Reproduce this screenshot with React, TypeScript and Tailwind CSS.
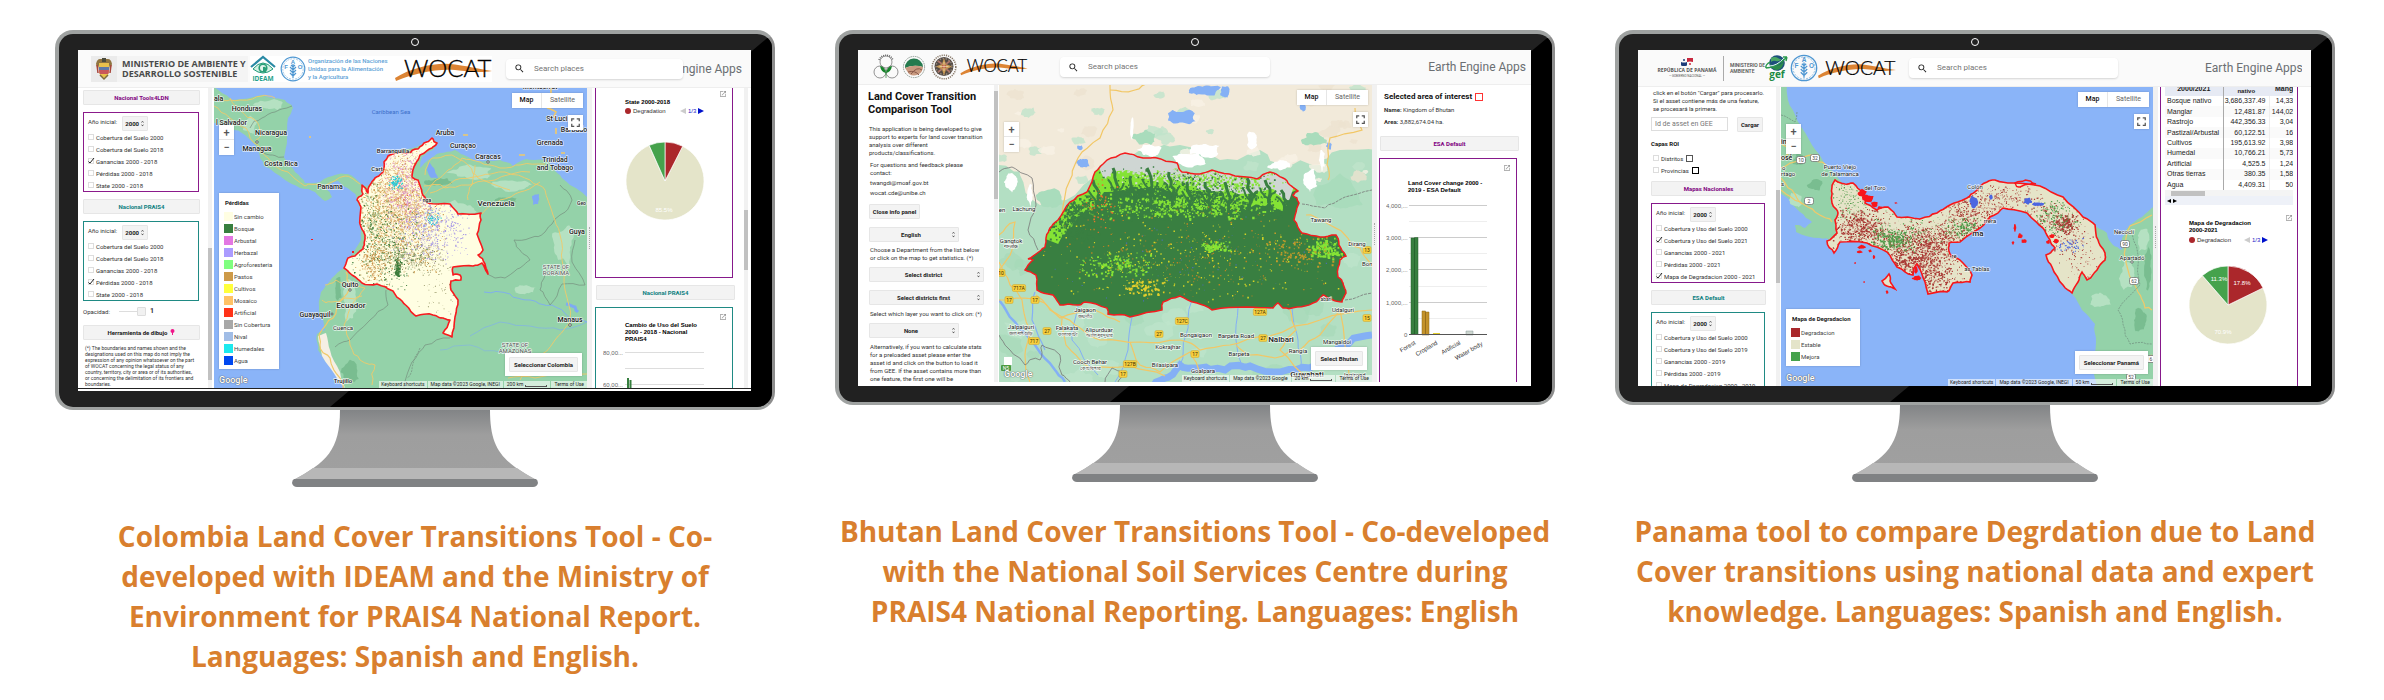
import type { ReactNode } from "react";
import { MdSearch, MdFullscreen, MdOpenInNew, MdUnfoldMore } from "react-icons/md";

type Pt = [number, number];

/* ---------- deterministic drawing helpers ---------- */

function rng(seed: number) {
  let s = seed >>> 0;
  return () => {
    s = (s * 1664525 + 1013904223) >>> 0;
    return s / 4294967296;
  };
}

// Subdivides a poly-line with random midpoint displacement, like a natural border.
function rough(points: Pt[], amp: number, seed: number, closed = true, passes = 2) {
  const r = rng(seed);
  let pts = points.slice();
  let a = amp;
  for (let k = 0; k < passes; k++) {
    const out: Pt[] = [];
    const n = closed ? pts.length : pts.length - 1;
    for (let i = 0; i < n; i++) {
      const p = pts[i];
      const q = pts[(i + 1) % pts.length];
      const len = Math.hypot(q[0] - p[0], q[1] - p[1]);
      const f = Math.min(1, len / 8) * a;
      out.push(p, [(p[0] + q[0]) / 2 + (r() - 0.5) * 2 * f, (p[1] + q[1]) / 2 + (r() - 0.5) * 2 * f]);
    }
    if (!closed) out.push(pts[pts.length - 1]);
    pts = out;
    a *= 0.6;
  }
  return "M" + pts.map((p) => p[0].toFixed(1) + " " + p[1].toFixed(1)).join("L") + (closed ? "Z" : "");
}

// Scatters small squares around a centre.
function specks(seed: number, n: number, cx: number, cy: number, rx: number, ry: number, size = 1) {
  const r = rng(seed);
  let d = "";
  for (let i = 0; i < n; i++) {
    const x = cx + (r() + r() - 1) * rx;
    const y = cy + (r() + r() - 1) * ry;
    const s = size * (0.5 + r());
    d += `M${x.toFixed(1)} ${y.toFixed(1)}h${s.toFixed(1)}v${s.toFixed(1)}h-${s.toFixed(1)}z`;
  }
  return d;
}

// A blob with an irregular edge.
function blob(cx: number, cy: number, rx: number, ry: number, seed: number) {
  const r = rng(seed);
  const pts: Pt[] = [];
  for (let i = 0; i < 12; i++) {
    const t = (i / 12) * Math.PI * 2;
    const k = 0.6 + r() * 0.5;
    pts.push([cx + Math.cos(t) * rx * k, cy + Math.sin(t) * ry * k]);
  }
  return rough(pts, Math.min(1.6, rx * 0.3), seed + 1);
}

/* ---------- logos ---------- */

function Wocat({ className }: { className: string }) {
  return (
    <svg viewBox="0 0 97 26" className={`overflow-visible ${className}`} role="img" aria-label="WOCAT">
      <path d="M0 22C18 11 42 6 60 8.500S84 13 97 15C84 17 74 15.500 60 14C42 12.500 20 17 1 25z" fill="#dc8434" />
      <text x="9" y="20.500" fontFamily="Lato, sans-serif" fontSize="24" fontWeight="300" fill="#000" stroke="#000" strokeWidth="0.300">WOCAT</text>
    </svg>
  );
}

function Fao({ className }: { className: string }) {
  return (
    <svg viewBox="0 0 26 26" className={className} fill="none" stroke="#4f97d2">
      <circle cx="13" cy="13" r="11.800" strokeWidth="1.200" />
      <circle cx="13" cy="13" r="10.200" strokeWidth="0.500" strokeDasharray="2 1" />
      <path d="M13 8v14M13 11l-2-2M13 11l2-2M13 14l-3-3M13 14l3-3M13 17l-3-3M13 17l3-3M13 20l-3-3M13 20l3-3" strokeWidth="1.200" />
      <g fontFamily="Liberation Sans, sans-serif" fontSize="6" fontWeight="700" fill="#4f97d2" stroke="none" textAnchor="middle">
        <text x="6" y="13">F</text>
        <text x="13" y="7.500">A</text>
        <text x="20" y="13">O</text>
      </g>
    </svg>
  );
}

function ColombiaArms() {
  return (
    <svg viewBox="0 0 26 26" className="size-[26px] shrink-0 bg-[#ebebeb]">
      <path d="M5 8q1-5 4-5h8q3 0 4 5l-2 6-1-5H8l-1 5z" fill="#8f7440" />
      <path d="M11 2h4v4h-4z" fill="#4b4b3b" />
      <path d="M8 7h10v8q0 5-5 7-5-2-5-7z" fill="#e9c14c" />
      <path d="M8 11h10v3H8z" fill="#5f79a8" />
      <path d="M8 14h10q0 3-1 4H9q-1-1-1-4z" fill="#c8565a" />
      <path d="M9 19l4 4 4-4" stroke="#7e6a3c" fill="none" strokeWidth="1.500" />
      <path d="M6 9l1 8M20 9l-1 8" stroke="#a8453a" strokeWidth="1.500" />
    </svg>
  );
}

function Ideam() {
  return (
    <svg viewBox="0 0 26 26" className="size-[26px] shrink-0 overflow-visible">
      <path d="M1 11L13 1l12 10" fill="none" stroke="#2a8aa5" strokeWidth="2.200" />
      <path d="M3 13Q13 1 23 13Q13 21 3 13z" fill="#d6f0e4" stroke="#1f9a78" />
      <circle cx="13" cy="12" r="4.600" fill="#2a9f78" />
      <path d="M13 15a3 3 0 1 1 3-3q-1-2-3-1z" fill="#e5f5ee" />
      <text x="13" y="24.500" textAnchor="middle" fontFamily="Open Sans, sans-serif" fontSize="6.500" fontWeight="700" fill="#25a08a">IDEAM</text>
    </svg>
  );
}

function TreeLogo() {
  return (
    <svg viewBox="0 0 26 26" className="size-[26px]" fill="none" stroke="#666" strokeWidth="0.700">
      <circle cx="13" cy="8" r="6" />
      <circle cx="7" cy="18" r="6" />
      <circle cx="19" cy="18" r="6" />
      <path d="M6 6A7.500 7.500 0 0 1 20 6" strokeDasharray="1 1" strokeWidth="1.600" />
      <path d="M13 24v-8" stroke="#2b8a3a" />
      <path d="M13 19q-1-6-6-7 1 6 6 7zM13 19q1-6 6-7-1 6-6 7z" fill="#16852b" stroke="none" />
    </svg>
  );
}

function SoilLogo() {
  return (
    <svg viewBox="0 0 24 24" className="size-[24px]">
      <circle cx="12" cy="12" r="10.600" fill="none" stroke="#8e9a92" strokeDasharray="1.500 0.800" />
      <path d="M3 13A9 9 0 0 1 21 12Q12 9 3 13z" fill="#257a4e" />
      <path d="M3 13Q12 9 21 12A9 9 0 0 1 7 19z" fill="#c99a80" />
      <path d="M6 17Q13 15 17 20M9 19q6-8 11-4" stroke="#8a5a4a" fill="none" />
    </svg>
  );
}

function BhutanSeal() {
  return (
    <svg viewBox="0 0 26 26" className="size-[26px]">
      <circle cx="13" cy="13" r="11.800" fill="none" stroke="#8a7b6b" strokeWidth="1.600" strokeDasharray="1.200 1" />
      <circle cx="13" cy="12.500" r="9.500" fill="#544a44" />
      <circle cx="13" cy="12.500" r="8" fill="none" stroke="#8f8579" strokeDasharray="1.500 1.500" strokeWidth="1.500" />
      <path d="M13 4l2 6 6 2.500-6 3-2 6-2-6-6-3 6-2.500z" fill="#c89a55" />
      <path d="M7 7l4 3M19 7l-4 3M7 18l4-3M19 18l-4-3" stroke="#b0766a" strokeWidth="1.600" />
      <circle cx="13" cy="12.500" r="2" fill="#b8473f" />
      <path d="M13 8v9M8.500 12.500h9" stroke="#f0ddb0" strokeWidth="0.700" />
    </svg>
  );
}

function Gef() {
  return (
    <svg viewBox="0 0 24 26" className="h-[26px] w-[24px] shrink-0 overflow-visible">
      <circle cx="12" cy="8" r="7.800" fill="#1d4f7c" />
      <path d="M6 3q4-2 7 0t4 1q-3 3-6 2T6 7z" fill="#4aa764" />
      <path d="M5 9q7 5 14-3-1 8-7 9-5 0-7-6z" fill="#2b8b4b" />
      <path d="M1 13Q12 12 22 2M1 13q-1-3 4-6M22 2l-4 0M22 2l-1 4" stroke="#2b9a4d" strokeWidth="1.400" fill="none" />
      <path d="M4 11q8 0 15-8" stroke="#d8ecf4" fill="none" />
      <text x="12" y="22.500" textAnchor="middle" fontFamily="Open Sans, sans-serif" fontSize="10" fontWeight="700" fill="#1d8a45" stroke="#fafafa" strokeWidth="1" paintOrder="stroke">gef</text>
    </svg>
  );
}

function PanamaLogo() {
  return (
    <div className="flex shrink-0 items-center text-[#555]">
      <div className="flex w-[60px] flex-col items-center">
        <svg viewBox="0 0 12 8" className="h-[8px] w-[12px]">
          <path d="M6 0h6v4q-3-1-6 0z" fill="#c8283f" />
          <path d="M0 4q3 1 6 0v3.500q-3 1-6 0z" fill="#1d3d7a" />
          <circle cx="3" cy="2" r="1" fill="#1d3d7a" />
          <circle cx="9" cy="6" r="1" fill="#c8283f" />
        </svg>
        <span className="mt-px font-['Open_Sans',sans-serif] text-[5px] leading-[7px] font-bold whitespace-nowrap">REPÚBLICA DE PANAMÁ</span>
        <span className="text-[3px] leading-[4px] whitespace-nowrap">— GOBIERNO NACIONAL —</span>
      </div>
      <div className="mx-[6px] h-[25px] w-px bg-[#aaa]" />
      <span className="w-[35px] text-[5px] leading-[6px] font-semibold whitespace-nowrap">
        MINISTERIO DE
        <br />
        AMBIENTE
      </span>
    </div>
  );
}

/* ---------- shared controls ---------- */

function SearchBox({ className }: { className: string }) {
  return (
    <label className={`flex h-[20px] items-center rounded-[4px] bg-white pl-[8px] shadow-[0_1px_2px_rgba(0,0,0,0.15)] ${className}`}>
      <MdSearch className="size-[11px] shrink-0 text-[#222]" />
      <input
        aria-label="Search places"
        placeholder="Search places"
        className="ml-[9px] w-full min-w-0 bg-transparent text-[8px] outline-none placeholder:text-[#757575]"
      />
    </label>
  );
}

function Brand({ className }: { className: string }) {
  return (
    <span className={`overflow-hidden text-[12px] leading-[18px] whitespace-nowrap text-[#6b6f73] ${className}`}>
      Earth Engine Apps
    </span>
  );
}

function Btn({ children, className }: { children: ReactNode; className: string }) {
  return (
    <button className={`flex h-[15px] shrink-0 items-center justify-center rounded-[1px] border border-[#e6e6e6] bg-[#f3f3f3] text-[6px] font-bold whitespace-nowrap ${className}`}>
      {children}
    </button>
  );
}

function Drop({ value, label, className }: { value: string; label: string; className: string }) {
  return (
    <span className={`relative flex h-[15px] shrink-0 rounded-[1px] border border-[#e6e6e6] bg-[#f3f3f3] ${className}`}>
      <select aria-label={label} className="w-full appearance-none bg-transparent pr-[6px] text-center text-[6px] font-bold text-[#222] [text-align-last:center]">
        <option>{value}</option>
      </select>
      <MdUnfoldMore className="pointer-events-none absolute top-[3px] right-px size-[7px] text-[#444]" />
    </span>
  );
}

function Check({ label, on, swatch }: { label: string; on?: boolean; swatch?: string }) {
  return (
    <label className="flex h-[12px] shrink-0 items-center text-[6px] whitespace-nowrap text-[#333]">
      <span className="relative mr-[2px] flex size-[6px]">
        <input type="checkbox" defaultChecked={on} className="peer size-[6px] appearance-none border border-[#ddd] bg-white" />
        <svg viewBox="0 0 6 6" className="pointer-events-none absolute inset-0 hidden overflow-visible peer-checked:block">
          <path d="M0.500 3.500L2 5L6 0" fill="none" stroke="#222" />
        </svg>
      </span>
      {label}
      {swatch && <span className={`ml-[3px] size-[7px] border bg-white ${swatch}`} />}
    </label>
  );
}

function LayerBox({ items, checked, className }: { items: string[]; checked: number[]; className: string }) {
  return (
    <div className={`flex h-[80px] shrink-0 flex-col border pt-[3px] pl-[4px] ${className}`}>
      <div className="flex h-[15px] shrink-0 items-start text-[6px] text-[#333]">
        <span className="mr-[5px] leading-[11px]">Año inicial:</span>
        <Drop value="2000" label="Año inicial" className="w-[26px]" />
      </div>
      {items.map((t, i) => (
        <Check key={t} label={t} on={checked.includes(i)} />
      ))}
    </div>
  );
}

function Scroll({ thumb }: { thumb: string }) {
  return (
    <div className="relative w-[4px] shrink-0 self-stretch bg-[#f1f1f1]">
      <div className={`w-full bg-[#c1c1c1] ${thumb}`} />
    </div>
  );
}

function Splitter() {
  return (
    <div className="flex w-[5px] shrink-0 items-center justify-center bg-[#f1f1f1]">
      <div className="h-[22px] border-l border-dotted border-[#aaa]" />
    </div>
  );
}

type Place = { t: string; x: number; y: number; s?: number; w?: number; c?: string; a?: "start" | "end" };

function Labels({ items }: { items: Place[] }) {
  return (
    <g fontFamily="Roboto, sans-serif" textAnchor="middle" stroke="#fff" strokeOpacity="0.75" strokeWidth="1.500" strokeLinejoin="round" paintOrder="stroke">
      {items.map((p) => (
        <text key={p.t + p.x + "-" + p.y} x={p.x} y={p.y + 2.5} fontSize={p.s ?? 7} fontWeight={p.w ?? 500} fill={p.c ?? "#222"} textAnchor={p.a ?? "middle"}>
          {p.t}
        </text>
      ))}
    </g>
  );
}

function MapFrame({
  viewBox,
  drawing,
  legend,
  action,
  scale,
  source,
  right,
}: {
  viewBox: string;
  drawing: ReactNode;
  legend?: ReactNode;
  action: string;
  scale: string;
  source: string;
  right: string;
}) {
  return (
    <div className="relative min-w-0 overflow-hidden bg-[#8ab4f8]">
      <svg viewBox={viewBox} preserveAspectRatio="xMidYMid slice" className="absolute inset-0 size-full">
        {drawing}
      </svg>
      <div className="absolute top-[37px] left-[5px] flex w-[15px] flex-col divide-y divide-[#e6e6e6] bg-white text-[#555] shadow-[0_0_2px_rgba(0,0,0,0.2)]">
        <button aria-label="Zoom in" className="flex h-[15px] items-center justify-center text-[11px] leading-none font-medium">+</button>
        <button aria-label="Zoom out" className="flex h-[15px] items-center justify-center text-[11px] leading-none font-medium">−</button>
      </div>
      <div className={`absolute top-[5px] flex h-[15px] divide-x divide-[#e6e6e6] bg-white text-[7px] shadow-[0_0_2px_rgba(0,0,0,0.2)] ${right}`}>
        <button className="w-[30px] font-medium text-[#111]">Map</button>
        <button className="w-[41px] text-[#666]">Satellite</button>
      </div>
      <button aria-label="Full screen" className={`absolute top-[27px] flex size-[15px] items-center justify-center bg-white text-[#555] shadow-[0_0_2px_rgba(0,0,0,0.2)] ${right}`}>
        <MdFullscreen className="size-[15px]" />
      </button>
      {legend}
      <div className="absolute right-[5px] bottom-[12px] bg-white p-[4px] shadow-[0_0_2px_rgba(0,0,0,0.2)]">
        <Btn className="px-[4px] text-[#222]">{action}</Btn>
      </div>
      <span className="absolute bottom-0 left-[5px] text-[9px] leading-[15px] font-medium text-white [text-shadow:0_0_1px_#555,0_0_1px_#555]">Google</span>
      <div className="absolute right-0 bottom-0 flex h-[7px] gap-px text-[5px] leading-[7px] whitespace-nowrap text-[#222]">
        <span className="bg-white/60 px-[2px]">Keyboard shortcuts</span>
        <span className="bg-white/60 px-[3px]">{source}</span>
        <span className="flex items-center gap-[2px] bg-white/60 px-[3px]">
          {scale}
          <i className="mt-[3px] h-[2px] w-[22px] border border-t-0 border-[#555]" />
        </span>
        <a href="#terms" className="bg-white/60 px-[3px]">Terms of Use</a>
      </div>
    </div>
  );
}

function Legend({ title, rows, className }: { title: string; rows: [string, string][]; className: string }) {
  return (
    <div className={`absolute left-[5px] bg-white px-[5px] text-[6px] text-[#222] shadow-[0_0_2px_rgba(0,0,0,0.2)] ${className}`}>
      <div className="h-[15px] pt-[3px] pl-px leading-[10px] font-bold whitespace-nowrap">{title}</div>
      <ul>
        {rows.map(([name, color]) => (
          <li key={name} className="flex h-[12px] items-center gap-px whitespace-nowrap text-[#444]">
            <svg viewBox="0 0 9 9" className="size-[9px]">
              <rect width="9" height="9" fill={color} />
            </svg>
            {name}
          </li>
        ))}
      </ul>
    </div>
  );
}

/* ---------- pies and bars ---------- */

function slice(cx: number, cy: number, r: number, from: number, to: number) {
  const p = (a: number) => {
    const t = ((a - 90) * Math.PI) / 180;
    return `${(cx + r * Math.cos(t)).toFixed(2)} ${(cy + r * Math.sin(t)).toFixed(2)}`;
  };
  return `M${cx} ${cy}L${p(from)}A${r} ${r} 0 ${to - from > 180 ? 1 : 0} 1 ${p(to)}Z`;
}

function Pie({ red, green, labels }: { red: number; green: number; labels: [string, number, number][] }) {
  return (
    <svg viewBox="0 0 80 80" className="size-[80px] shrink-0">
      <g stroke="#fff" strokeWidth="0.700">
        <path d={slice(40, 40, 39, red, 360 - green)} fill="#e4e4c9" />
        <path d={slice(40, 40, 39, 0, red)} fill="#ab272b" />
        <path d={slice(40, 40, 39, 360 - green, 360)} fill="#45a24c" />
      </g>
      <g fontFamily="Liberation Sans, sans-serif" fontSize="6" fill="#fff" textAnchor="middle">
        {labels.map(([t, x, y]) => (
          <text key={t} x={x} y={y}>{t}</text>
        ))}
      </g>
    </svg>
  );
}

function PieLegend({ text }: { text: string }) {
  return (
    <div className="flex h-[10px] items-center font-['Liberation_Sans',sans-serif] text-[6px] whitespace-nowrap text-[#333]">
      <span className="mr-[2px] size-[6px] rounded-full bg-[#ab272b]" />
      <span className="w-[47px]">{text}</span>
      <svg viewBox="0 0 6 6" className="size-[6px]"><path d="M6 0v6L0 3z" fill="#ccc" /></svg>
      <span className="mx-[2px] text-[#2222c8]">1/3</span>
      <svg viewBox="0 0 6 6" className="size-[6px]"><path d="M0 0v6l6-3z" fill="#0011cc" /></svg>
    </div>
  );
}

const chartTitle = "font-['Liberation_Sans',sans-serif] text-[6px] leading-[7px] font-bold text-black";

/* ---------- Colombia ---------- */

const colombia: Pt[] = [
  [437, 143], [432, 138], [424, 143], [418, 149], [411, 152], [400, 152], [395, 153], [388, 156], [384, 162], [383, 172], [375, 178], [370, 185], [368, 193], [362, 185], [363, 194], [357, 200], [361, 207], [361, 227], [365, 239], [363, 249], [355, 256], [348, 258], [344, 268], [352, 275], [362, 283], [377, 284], [393, 291], [402, 301], [410, 310], [416, 316], [433, 315], [443, 318], [450, 320], [443, 333], [452, 337], [455, 317], [458, 300], [451, 290], [451, 281], [461, 280], [460, 275], [453, 275], [453, 267], [473, 266], [482, 263], [488, 274], [485, 264], [478, 255], [483, 250], [477, 234], [481, 220], [481, 213], [458, 214], [450, 204], [427, 203], [422, 193], [418, 180], [412, 177], [416, 163], [420, 155], [432, 148],
];
const colombiaPath = rough(colombia, 1.3, 7);
const southAmerica = rough([[357, 200], [361, 185], [370, 185], [383, 170], [388, 156], [400, 152], [424, 143], [436, 141], [433, 150], [422, 157], [420, 168], [428, 160], [440, 153], [455, 150], [466, 156], [478, 161], [500, 160], [513, 166], [526, 159], [545, 160], [552, 167], [560, 175], [570, 185], [592, 202], [592, 392], [345, 392], [336, 372], [318, 350], [317, 334], [325, 330], [319, 312], [321, 292], [332, 278], [344, 268], [361, 240], [361, 215]], 1.5, 3);
const centralAmerica = rough([[210, 84], [222, 93], [232, 100], [262, 95], [285, 100], [293, 108], [288, 118], [287, 140], [284, 157], [295, 172], [305, 183], [320, 182], [335, 175], [348, 174], [362, 185], [368, 193], [358, 201], [350, 190], [338, 181], [325, 189], [332, 197], [325, 201], [315, 192], [300, 188], [285, 180], [264, 166], [258, 150], [245, 135], [230, 128], [210, 120]], 1.5, 11);
const colombiaSpecks: [string, number, number, number, number, number, number][] = [
  ["#d1a35b", 1500, 398, 208, 50, 72, 0.9], ["#e8b97a", 1300, 400, 200, 48, 66, 0.8], ["#a99ae6", 560, 430, 228, 42, 36, 0.9],
  ["#d98bd0", 420, 405, 185, 28, 44, 0.8], ["#3c7d3c", 420, 385, 245, 44, 46, 0.9], ["#26c9d6", 60, 396, 182, 8, 8, 1.1], ["#26c9d6", 50, 432, 218, 10, 9, 1],
  ["#3c7d3c", 90, 397, 268, 4, 12, 1.3], ["#e2574c", 110, 400, 190, 44, 66, 0.7], ["#8b8b5b", 380, 412, 258, 40, 18, 0.7], ["#c98f45", 260, 374, 262, 18, 28, 0.8],
  ["#5f8f4d", 200, 372, 215, 16, 44, 0.8], ["#8b8b5b", 60, 440, 290, 26, 34, 0.7],
];

function ColombiaMap() {
  return (
    <>
      <rect x="214" y="88" width="373" height="300" fill="#8ab4f8" />
      <path d={southAmerica} fill="#94d2a9" />
      <path d={centralAmerica} fill="#94d2a9" />
      <g fill="#b5e1c2">
        <path d={blob(455, 208, 26, 8, 5)} />
        <path d={blob(470, 172, 24, 7, 6)} />
        <path d={blob(515, 185, 24, 6, 8)} />
        <path d={blob(563, 245, 12, 22, 9)} />
        <path d={blob(525, 290, 12, 6, 12)} />
        <path d={blob(270, 105, 16, 6, 13)} />
        <path d={blob(350, 300, 8, 26, 14)} />
        <path d={blob(250, 125, 8, 10, 19)} />
      </g>
      <g fill="#79bd90">
        <path d={blob(440, 182, 16, 5, 15)} />
        <path d={blob(505, 200, 14, 3, 16)} />
        <path d={blob(350, 372, 10, 14, 17)} />
        <path d={blob(338, 290, 4, 14, 18)} />
      </g>
      <path d={rough([[318, 336], [326, 333], [330, 350], [340, 372], [345, 388], [338, 380], [322, 356]], 1, 4)} fill="#f5efe4" />
      <path d={rough([[429, 162], [434, 168], [438, 178], [431, 178], [427, 170]], 1, 21)} fill="#7fa9f5" />
      <path d={rough([[532, 196], [539, 194], [538, 204], [533, 205]], 1, 22)} fill="#7fa9f5" />
      <g fill="none" stroke="#7eabf3" strokeWidth="0.900">
        <path d={rough([[484, 292], [510, 294], [530, 300], [552, 305], [570, 318], [587, 322]], 2, 31, false)} />
        <path d={rough([[470, 336], [500, 322], [530, 326], [560, 330], [587, 322]], 2, 32, false)} strokeWidth="0.600" />
        <path d={rough([[440, 350], [470, 345], [500, 352], [540, 360]], 3, 33, false)} strokeWidth="0.500" />
        <path d={rough([[566, 304], [575, 307], [578, 312]], 1, 34, false)} strokeWidth="3" />
      </g>
      <g fill="none" stroke="#758f7e" strokeWidth="0.700">
        <path d={rough([[487, 274], [505, 278], [520, 268], [530, 260], [520, 250], [514, 240], [530, 238], [545, 232], [560, 215], [572, 200], [560, 185]], 2, 41, false)} />
        <path d={rough([[450, 338], [425, 345], [412, 362], [404, 388]], 2, 42, false)} />
        <path d={rough([[386, 290], [388, 305], [370, 320], [350, 340], [335, 347]], 2, 43, false)} />
        <path d={rough([[420, 348], [412, 368], [407, 378]], 2, 44, false)} strokeDasharray="2 1" />
        <path d={rough([[575, 240], [572, 262], [585, 285], [562, 284], [550, 305], [540, 290], [545, 275]], 2, 45, false)} />
        <path d={rough([[292, 106], [275, 112], [262, 118], [250, 128]], 2, 46, false)} />
        <path d={rough([[258, 150], [270, 155], [284, 157]], 2, 47, false)} />
      </g>
      <g fill="none" stroke="#f0c96a" strokeWidth="0.900">
        <path d={rough([[420, 200], [436, 180], [448, 170], [462, 158], [480, 162], [500, 168], [520, 165], [545, 164]], 2, 51, false)} />
        <path d={rough([[430, 193], [455, 180], [480, 176], [505, 172], [530, 180], [545, 190], [553, 215], [560, 235], [562, 260], [565, 290], [570, 320]], 2, 52, false)} />
        <path d={rough([[424, 186], [445, 188], [470, 185], [495, 180], [530, 172]], 3, 53, false)} />
        <path d={rough([[482, 214], [500, 200], [520, 192], [540, 182]], 2, 54, false)} />
        <path d={rough([[468, 200], [472, 185], [475, 165]], 2, 55, false)} />
        <path d={rough([[425, 175], [432, 158], [452, 155], [468, 165], [478, 178], [510, 190]], 2, 56, false)} />
        <path d={rough([[222, 100], [240, 100], [262, 96], [275, 98]], 2, 57, false)} />
        <path d={rough([[214, 106], [230, 118], [246, 128], [258, 145], [268, 158], [288, 172], [305, 186], [325, 186], [345, 176], [360, 184]], 2, 58, false)} />
        <path d={rough([[230, 98], [242, 112], [255, 120], [262, 132], [256, 140]], 2, 59, false)} />
        <path d={rough([[346, 272], [350, 284], [341, 300], [333, 318], [322, 330], [320, 345], [330, 358], [340, 378], [343, 388]], 2, 60, false)} strokeWidth="1.200" />
        <path d={rough([[325, 285], [336, 280], [350, 284], [365, 288], [352, 305], [344, 325], [350, 345], [360, 360], [375, 365], [372, 385]], 2, 61, false)} />
        <path d={rough([[322, 300], [332, 302], [345, 298], [362, 296]], 2, 62, false)} />
        <path d={rough([[570, 322], [555, 340], [535, 358], [520, 380]], 2, 63, false)} />
        <path d={rough([[508, 378], [535, 378], [587, 374]], 2, 64, false)} />
        <path d={rough([[547, 108], [556, 112], [554, 118]], 1, 65, false)} strokeWidth="1.600" />
        <path d="M519 155h6M556 128v6M551 88v6M561 153h4M310 136v2M463 135h5" strokeWidth="1.600" />
      </g>
      <clipPath id="clip-colombia"><path d={colombiaPath} /></clipPath>
      <path d={colombiaPath} fill="#fffee2" />
      <g clipPath="url(#clip-colombia)">
        {colombiaSpecks.map(([c, n, x, y, rx, ry, s], i) => (
          <path key={i} d={specks(100 + i, n, x, y, rx, ry, s)} fill={c} />
        ))}
      </g>
      <path d={colombiaPath} fill="none" stroke="#f81a1e" strokeWidth="1.600" strokeLinejoin="round" />
      <path d="M311 239h2v1h-2zM352 251h2v2h-2z" fill="#f81a1e" />
      <Labels
        items={[
          { t: "Montserrat", x: 540, y: 86 }, { t: "ala", x: 214, y: 98, a: "start" }, { t: "Honduras", x: 247, y: 108 }, { t: "l Salvador", x: 216, y: 122, a: "start" },
          { t: "Nicaragua", x: 271, y: 132 }, { t: "Managua", x: 257, y: 148 }, { t: "Costa Rica", x: 281, y: 163 }, { t: "Panama", x: 330, y: 186 },
          { t: "Barranquilla", x: 393, y: 150, s: 6 }, { t: "Cart", x: 377, y: 168, s: 6 }, { t: "Aruba", x: 445, y: 132 }, { t: "Curaçao", x: 463, y: 145 },
          { t: "Caracas", x: 488, y: 156 }, { t: "St Luci", x: 557, y: 118 }, { t: "Barbado", x: 574, y: 129 }, { t: "Grenada", x: 550, y: 142 },
          { t: "Trinidad", x: 555, y: 159 }, { t: "and Tobago", x: 555, y: 167 }, { t: "nga", x: 427, y: 199, s: 5 }, { t: "Venezuela", x: 496, y: 203, s: 8 }, { t: "Guya", x: 569, y: 231, a: "start" },
          { t: "Geo", x: 577, y: 202, s: 5, a: "start" }, { t: "STATE OF", x: 556, y: 266, s: 6, w: 400, c: "#555" }, { t: "RORAIMA", x: 556, y: 272, s: 6, w: 400, c: "#555" },
          { t: "Manaus", x: 570, y: 319 }, { t: "STATE OF", x: 515, y: 344, s: 6, w: 400, c: "#555" }, { t: "AMAZONAS", x: 515, y: 350, s: 6, w: 400, c: "#555" },
          { t: "Quito", x: 350, y: 284 }, { t: "Ecuador", x: 351, y: 305, s: 8 }, { t: "Guayaquil", x: 315, y: 314 }, { t: "Cuenca", x: 343, y: 327, s: 6, w: 400 },
          { t: "Trujillo", x: 343, y: 380, s: 6 },
        ]}
      />
      <text x="391" y="114" textAnchor="middle" fontFamily="Roboto, sans-serif" fontSize="6" fill="#3c6fc9">Caribbean Sea</text>
      <g fill="#fff" stroke="#444" strokeWidth="0.800">
        <circle cx="350" cy="290" r="1.200" /><circle cx="257" cy="142" r="1.200" /><circle cx="488" cy="162" r="1.200" /><circle cx="570" cy="325" r="1.300" /><circle cx="332" cy="314" r="1" />
      </g>
    </>
  );
}

const nationalLayers = ["Cobertura del Suelo 2000", "Cobertura del Suelo 2018", "Ganancias 2000 - 2018", "Pérdidas 2000 - 2018", "State 2000 - 2018"];

function ColombiaScreen() {
  return (
    <div className="flex h-[341px] flex-col bg-white">
      <header className="flex h-[38px] shrink-0 items-center border-b border-[#eee] bg-[#fafafa] pr-[9px] pl-[13px]">
        <div className="flex w-[157px] shrink-0 items-center bg-[#f4f4f4]">
          <ColombiaArms />
          <span className="ml-[5px] font-['Open_Sans',sans-serif] text-[9px] leading-[10px] font-bold whitespace-nowrap text-[#4a4a4a]">
            MINISTERIO DE AMBIENTE Y
            <br />
            DESARROLLO SOSTENIBLE
          </span>
        </div>
        <div className="ml-[2px] flex shrink-0 items-center bg-white">
          <Ideam />
          <Fao className="ml-[4px] size-[26px]" />
          <span className="ml-[2px] w-[87px] text-[6px] leading-[8px] font-medium whitespace-nowrap text-[#5b9fd6]">
            Organización de las Naciones
            <br />
            Unidas para la Alimentación
            <br />
            y la Agricultura
          </span>
          <Wocat className="h-[26px] w-[97px]" />
        </div>
        <SearchBox className="ml-[14px] min-w-0 flex-1" />
        <Brand className="flex w-[59px] shrink-0 justify-end" />
      </header>
      <div className="grid min-h-0 flex-1 grid-cols-[136px_minmax(0,1fr)_164px] overflow-hidden">
        <div className="flex min-h-0 overflow-hidden">
          <div className="flex flex-1 flex-col pt-[2px] pl-[5px]">
            <Btn className="w-[117px] text-[#800080]">Nacional Tools4LDN</Btn>
            <LayerBox items={nationalLayers} checked={[2]} className="my-[7px] w-[116px] border-[#8b1a8b]" />
            <Btn className="w-[117px] text-[#0b8080]">Nacional PRAIS4</Btn>
            <LayerBox items={nationalLayers} checked={[3]} className="mt-[7px] w-[116px] border-[#1f8a84]" />
            <label className="flex h-[20px] shrink-0 items-center text-[6px] text-[#333]">
              <span className="w-[36px]">Opacidad:</span>
              <input
                type="range"
                defaultValue={100}
                className="h-px w-[27px] appearance-none bg-[#ddd] [&::-webkit-slider-thumb]:size-[9px] [&::-webkit-slider-thumb]:appearance-none [&::-webkit-slider-thumb]:rounded-[1px] [&::-webkit-slider-thumb]:border [&::-webkit-slider-thumb]:border-[#ddd] [&::-webkit-slider-thumb]:bg-[#f1f1f1]"
              />
              <b className="ml-[4px] text-[7px]">1</b>
            </label>
            <Btn className="mt-[4px] w-[117px] text-[#222]">
              Herramienta de dibujo
              <svg viewBox="0 0 5 6" className="mb-[2px] ml-[3px] h-[6px] w-[5px]">
                <circle cx="2.500" cy="2" r="2" fill="#f0168a" />
                <path d="M2.500 3v3" stroke="#f0168a" />
              </svg>
            </Btn>
            <p className="mt-[5px] pl-[2px] text-[5px] leading-[6px] whitespace-nowrap text-[#333]">
              (*) The boundaries and names shown and the
              <br />designations used on this map do not imply the
              <br />expression of any opinion whatsoever on the part
              <br />of WOCAT concerning the legal status of any
              <br />country, territory, city or area or of its authorities,
              <br />or concerning the delimitation of its frontiers and
              <br />boundaries.
            </p>
          </div>
          <Scroll thumb="mt-[160px] h-[132px]" />
          <div className="w-[2px]" />
        </div>
        <MapFrame
          viewBox="214 88 373 300"
          drawing={<ColombiaMap />}
          right="right-[4px]"
          action="Seleccionar Colombia"
          scale="200 km"
          source="Map data ©2023 Google, INEGI"
          legend={
            <Legend
              title="Pérdidas"
              className="top-[105px] h-[176px] w-[60px] pt-[2px]"
              rows={[
                ["Sin cambio", "#fffee2"], ["Bosque", "#377f3f"], ["Arbustal", "#e377e3"], ["Herbazal", "#ab9bff"], ["Agroforesteria", "#80ff80"],
                ["Pastos", "#cd9a48"], ["Cultivos", "#ffff3c"], ["Mosaico", "#ffc266"], ["Artificial", "#ff3319"], ["Sin Cobertura", "#a8a8a8"],
                ["Nival", "#a1bde6"], ["Humedales", "#1ce9ee"], ["Agua", "#0048f0"],
              ]}
            />
          }
        />
        <div className="flex min-h-0 overflow-hidden">
          <Splitter />
          <div className="flex flex-1 flex-col pl-[3px]">
            <section className="flex h-[190px] w-[138px] shrink-0 flex-col border border-t-0 border-[#86198b] pl-[29px]">
              <MdOpenInNew className="mt-[2px] mr-[5px] size-[8px] shrink-0 self-end text-[#999]" />
              <h3 className={`mt-px ${chartTitle}`}>State 2000-2018</h3>
              <PieLegend text="Degradation" />
              <div className="mt-[25px]">
                <Pie red={27} green={24} labels={[["85.5%", 39, 71]]} />
              </div>
            </section>
            <Btn className="mt-[7px] ml-px w-[139px] text-[#0b8080]">Nacional PRAIS4</Btn>
            <section className="mt-[7px] flex h-[120px] w-[138px] shrink-0 flex-col border border-[#1f8a84]">
              <MdOpenInNew className="mt-[5px] mr-[5px] size-[8px] shrink-0 self-end text-[#999]" />
              <h3 className={`mt-px ml-[29px] ${chartTitle}`}>
                Cambio de Uso del Suelo
                <br />2000 - 2018 - Nacional
                <br />PRAIS4
              </h3>
              <svg viewBox="0 0 110 50" className="mt-[5px] ml-[7px] h-[50px] w-[110px] shrink-0">
                <path d="M22 4.500h79M22 20.500h79M22 36.500h79" stroke="#ddd" />
                <path d="M24 30h2v20h-2zM26.500 32h2v18h-2z" fill="#377f3f" />
                <g fontFamily="Liberation Sans, sans-serif" fontSize="6" fill="#666">
                  <text x="0" y="7">80,00...</text>
                  <text x="0" y="39">60,00...</text>
                </g>
              </svg>
            </section>
          </div>
          <Scroll thumb="mt-[122px] h-[60px]" />
          <div className="w-[3px]" />
        </div>
      </div>
      <div className="h-[3px] shrink-0 border-t border-[#222] bg-white" />
    </div>
  );
}

/* ---------- Bhutan ---------- */

const bhutan: Pt[] = [
  [1028, 259], [1040, 251], [1045, 247], [1046, 238], [1050, 228], [1058, 220], [1070, 202], [1087, 192], [1095, 172], [1107, 160], [1125, 153], [1143, 158], [1157, 158], [1177, 163], [1182, 172], [1200, 174], [1212, 170], [1235, 176], [1257, 179], [1270, 172], [1283, 178], [1290, 185], [1298, 191], [1293, 195], [1299, 203], [1294, 220], [1302, 233], [1320, 237], [1336, 235], [1339, 245], [1346, 256], [1340, 260], [1338, 277], [1343, 283], [1346, 293], [1342, 302], [1333, 300], [1323, 295], [1313, 303], [1297, 307], [1283, 308], [1278, 303], [1273, 308], [1247, 307], [1212, 310], [1197, 303], [1180, 296], [1163, 302], [1162, 310], [1130, 317], [1108, 314], [1107, 308], [1085, 302], [1077, 305], [1060, 305], [1053, 295], [1037, 290], [1036, 275], [1025, 270], [1033, 260],
];
const bhutanPath = rough(bhutan, 1.2, 17);
const northRidge: Pt[] = [[1100, 170], [1125, 160], [1157, 164], [1177, 170], [1200, 180], [1235, 182], [1262, 182], [1275, 180], [1292, 192]];
const northWest: Pt[] = [[1048, 240], [1058, 224], [1072, 208], [1090, 196], [1100, 178], [1115, 170]];

// Branching valleys that climb from the forest towards the ridge.
const valleys: [number, number, number][] = [
  [1096, 214, 34], [1116, 206, 38], [1134, 210, 34], [1150, 204, 36], [1172, 206, 34], [1190, 212, 30], [1208, 212, 30], [1228, 212, 30], [1250, 210, 32], [1268, 206, 26], [1284, 212, 22],
];

function BhutanMap() {
  const patches = rng(77);
  const hills = Array.from({ length: 52 }, (_, i) => ({ x: 999 + patches() * 373, y: 85 + patches() * 100, s: 3 + patches() * 9, k: i }));
  const low = Array.from({ length: 34 }, (_, i) => ({ x: 999 + patches() * 373, y: 225 + patches() * 160, s: 5 + patches() * 12, k: i }));
  return (
    <>
      <rect x="999" y="85" width="373" height="297" fill="#b3dfc3" />
      <path d={rough([[999, 80], [1376, 80], [1376, 150], [1340, 150], [1320, 165], [1290, 165], [1260, 150], [1220, 160], [1180, 145], [1140, 150], [1100, 165], [1075, 195], [1040, 205], [1020, 175], [999, 165]], 5, 60)} fill="#f2eada" />
      {hills.map((h) => (
        <path key={h.k} d={blob(h.x, h.y, h.s, h.s * 0.6, 200 + h.k)} fill={h.k % 3 === 0 ? "#bfe3ca" : h.k % 3 === 1 ? "#ece2cf" : "#f7f1e5"} opacity="0.8" />
      ))}
      {low.map((h) => (
        <path key={h.k} d={blob(h.x, h.y, h.s, h.s * 0.7, 300 + h.k)} fill={h.k % 2 ? "#a5d9b8" : "#c0e6cd"} opacity="0.6" />
      ))}
      <g fill="#fff">
        <path d={blob(1190, 160, 20, 8, 81)} /><path d={blob(1205, 150, 16, 8, 82)} /><path d={blob(1252, 140, 6, 10, 83)} />
        <path d={blob(1310, 180, 8, 12, 84)} /><path d={blob(1322, 160, 3, 12, 85)} /><path d={blob(1132, 128, 2, 12, 86)} />
        <path d={blob(1012, 182, 8, 10, 87)} /><path d={blob(1030, 195, 4, 12, 88)} /><path d={blob(1150, 150, 14, 6, 89)} /><path d={blob(1280, 165, 14, 5, 90)} />
      </g>
      <g fill="#a9dcbc">
        <path d={blob(1315, 140, 16, 8, 91)} /><path d={blob(1145, 138, 12, 8, 92)} /><path d={blob(1050, 200, 16, 10, 93)} /><path d={blob(1340, 195, 26, 20, 94)} />
      </g>
      <g fill="#84b0f5">
        <path d={blob(1181, 117, 16, 8, 95)} /><path d={blob(1083, 163, 7, 6, 96)} /><path d={blob(1080, 148, 4, 3, 97)} /><path d={blob(1205, 90, 18, 6, 98)} />
        <path d={blob(1225, 92, 6, 7, 99)} /><path d={blob(1303, 107, 4, 6, 100)} /><path d={blob(1329, 146, 3, 4, 101)} />
      </g>
      <g fill="none" stroke="#84b0f5">
        <path d={rough([[1372, 335], [1350, 342], [1330, 352], [1310, 368], [1280, 372], [1250, 366], [1225, 370], [1200, 368], [1180, 365], [1165, 378], [1150, 390]], 3, 110, false)} strokeWidth="7" />
        <path d={rough([[999, 300], [1015, 322], [1035, 345], [1055, 370], [1065, 382]], 2, 111, false)} strokeWidth="2.500" />
        <path d={rough([[1035, 292], [1032, 320], [1045, 350]], 2, 112, false)} strokeWidth="1.200" />
        <path d={rough([[1078, 306], [1072, 340], [1098, 375]], 2, 113, false)} />
        <path d={rough([[1132, 317], [1128, 350], [1115, 382]], 2, 114, false)} />
        <path d={rough([[1192, 300], [1186, 335], [1180, 365]], 2, 115, false)} />
        <path d={rough([[1238, 307], [1236, 340], [1242, 366]], 2, 116, false)} />
        <path d={rough([[1292, 307], [1298, 340], [1300, 368]], 2, 117, false)} />
      </g>
      <g fill="none" stroke="#f2c766" strokeWidth="1.200">
        <path d={rough([[999, 300], [1035, 299], [1050, 310], [1075, 325], [1100, 340], [1140, 342], [1180, 340], [1200, 350], [1230, 345], [1270, 336], [1320, 320], [1372, 310]], 2, 120, false)} />
        <path d={rough([[999, 262], [1010, 285], [1022, 300], [1030, 330], [1025, 355], [1030, 382]], 2, 121, false)} />
        <path d={rough([[1036, 295], [1060, 318], [1095, 310], [1120, 322]], 2, 122, false)} />
        <path d={rough([[1062, 318], [1066, 345], [1090, 368], [1130, 366], [1165, 376]], 2, 123, false)} />
        <path d={rough([[1130, 342], [1140, 365], [1160, 372], [1190, 352], [1200, 375]], 2, 124, false)} />
        <path d={rough([[1236, 345], [1250, 355], [1275, 358], [1300, 350], [1320, 335], [1340, 310], [1350, 382]], 2, 125, false)} />
        <path d={rough([[1290, 310], [1296, 330], [1280, 350], [1310, 380]], 2, 126, false)} />
        <path d={rough([[1110, 85], [1113, 110], [1100, 138], [1078, 158], [1070, 180], [1062, 215]], 2, 127, false)} />
        <path d={rough([[1110, 90], [1135, 90], [1150, 82]], 2, 128, false)} />
        <path d={rough([[1355, 108], [1362, 130], [1330, 138], [1327, 165], [1328, 180]], 2, 129, false)} />
        <path d={rough([[1306, 215], [1325, 222], [1345, 235], [1360, 248], [1372, 265]], 2, 130, false)} />
        <path d={rough([[999, 235], [1015, 222], [1012, 250], [999, 270]], 2, 131, false)} />
      </g>
      <g fill="none" stroke="#777" strokeWidth="0.800">
        <path d={rough([[999, 172], [1012, 167], [1032, 178], [1036, 205], [1028, 230], [1038, 250]], 2, 132, false)} />
        <path d={rough([[999, 335], [1010, 350], [1025, 365], [1040, 360], [1042, 345], [1060, 355], [1062, 375], [1070, 382]], 3, 133, false)} />
        <path d={rough([[1105, 382], [1112, 368], [1122, 372], [1118, 382]], 2, 134, false)} />
        <path d={rough([[1302, 204], [1325, 208], [1345, 197], [1372, 190]], 2, 135, false)} strokeDasharray="3 1" />
        <path d={rough([[1345, 300], [1372, 293]], 2, 136, false)} strokeDasharray="3 1" />
      </g>
      <clipPath id="clip-bhutan"><path d={bhutanPath} /></clipPath>
      <path d={bhutanPath} fill="#397f41" />
      <g clipPath="url(#clip-bhutan)" fill="none">
        <path d={rough(northRidge, 4, 140, false, 3)} stroke="#84e335" strokeWidth="46" />
        <path d={rough(northWest, 3, 141, false, 3)} stroke="#84e335" strokeWidth="22" />
        <path d={specks(148, 700, 1180, 203, 108, 16, 2.2)} fill="#397f41" />
        <path d={specks(151, 500, 1180, 206, 108, 14, 1.6)} fill="#84e335" />
        <path d={rough(northRidge, 3, 142, false, 3)} stroke="#cfd6d3" strokeWidth="18" />
        <path d={specks(153, 500, 1190, 180, 100, 13, 1.6)} fill="#84e335" />
        <path d={specks(145, 300, 1190, 172, 100, 12, 1.6)} fill="#cfd6d3" />
        <path d={specks(149, 420, 1075, 217, 30, 24, 1.8)} fill="#397f41" />
        {valleys.map(([x, y, h], i) => (
          <g key={x} stroke="#397f41" strokeWidth="3">
            <path d={rough([[x, y], [x + 2, y - h / 2], [x - 3, y - h]], 3, 400 + i, false)} />
            <path d={rough([[x, y - h * 0.2], [x + 8, y - h * 0.6]], 2, 430 + i, false)} strokeWidth="2" />
            <path d={rough([[x, y - h * 0.3], [x - 8, y - h * 0.7]], 2, 450 + i, false)} strokeWidth="2" />
          </g>
        ))}
        <path d={specks(150, 420, 1180, 190, 110, 24, 1.3)} fill="#397f41" />
        <path d={specks(154, 170, 1115, 265, 40, 14, 1.5)} fill="#84e335" />
        <path d={specks(155, 130, 1325, 248, 20, 12, 1.8)} fill="#84e335" />
        <path d={specks(162, 90, 1215, 246, 18, 6, 1.6)} fill="#84e335" />
        <path d={specks(156, 300, 1190, 258, 155, 52, 1.1)} fill="#d5d425" />
        <path d={specks(157, 240, 1190, 255, 155, 55, 1)} fill="#b88424" />
        <path d={specks(158, 110, 1300, 252, 40, 22, 1.4)} fill="#c29a2a" />
        <path d={specks(159, 80, 1145, 287, 22, 9, 1.6)} fill="#e3cf2b" />
        <path d={specks(160, 60, 1100, 205, 20, 30, 1.2)} fill="#e0742a" />
        <path d={specks(161, 60, 1200, 262, 150, 50, 0.9)} fill="#4a6fb5" />
      </g>
      <path d={bhutanPath} fill="none" stroke="#f41c1e" strokeWidth="1.500" />
      <Shield t="717A" x={1019} y={288} /><Shield t="17" x={1009} y={300} /><Shield t="17" x={1035} y={300} /><Shield t="10" x={1001} y={273} />
      <Shield t="27" x={1047} y={331} /><Shield t="717" x={1034} y={341} /><Shield t="127C" x={1182} y={321} /><Shield t="27" x={1159} y={334} />
      <Shield t="127B" x={1130} y={364} /><Shield t="17" x={1123} y={374} /><Shield t="17" x={1195} y={354} /><Shield t="127A" x={1260} y={312} />
      <Shield t="27" x={1263} y={338} /><Shield t="15" x={1367} y={318} /><Shield t="13" x={1367} y={250} />
      <rect x="1004" y="357" width="8" height="8" fill="#fff" />
      <rect x="1001" y="365" width="10" height="6" rx="1" fill="#4c9a3f" />
      <text x="1006" y="370" textAnchor="middle" fontFamily="Roboto, sans-serif" fontSize="5" fill="#fff">N5</text>
      <Labels
        items={[
          { t: "Lachung", x: 1024, y: 208, s: 6, w: 400 }, { t: "en", x: 1002, y: 209, s: 6, w: 400 }, { t: "Gangtok", x: 1011, y: 240, s: 6, w: 400 }, { t: "गान्तोक", x: 1011, y: 245, s: 5, w: 400 },
          { t: "Tawang", x: 1321, y: 219, s: 6, w: 400 }, { t: "Dirang", x: 1357, y: 243, s: 6, w: 400 }, { t: "Bon", x: 1362, y: 263, s: 6, w: 400, a: "start" },
          { t: "Jaigaon", x: 1085, y: 309, s: 6, w: 400 }, { t: "জয়গাঁও", x: 1085, y: 315, s: 5, w: 400 }, { t: "Jalpaiguri", x: 1021, y: 326, s: 6, w: 400 }, { t: "জলপাইগুড়ি", x: 1021, y: 332, s: 5, w: 400 },
          { t: "Falakata", x: 1067, y: 327, s: 6, w: 400 }, { t: "ফালাকাটা", x: 1067, y: 333, s: 5, w: 400 }, { t: "Alipurduar", x: 1099, y: 329, s: 6, w: 400 }, { t: "আলিপুরদুয়ার", x: 1099, y: 334, s: 5, w: 400 },
          { t: "Cooch Behar", x: 1090, y: 361, s: 6, w: 400 }, { t: "কোচবিহার", x: 1090, y: 367, s: 5, w: 400 }, { t: "Kokrajhar", x: 1168, y: 346, s: 6, w: 400 },
          { t: "Bilasipara", x: 1165, y: 364, s: 6, w: 400 }, { t: "Bongaigaon", x: 1196, y: 334, s: 6, w: 400 }, { t: "Barpeta Road", x: 1236, y: 335, s: 6, w: 400 },
          { t: "Nalbari", x: 1281, y: 339, s: 8 }, { t: "Mangaldoi", x: 1337, y: 341, s: 6, w: 400 }, { t: "Udalguri", x: 1343, y: 309, s: 6, w: 400 }, { t: "abari", x: 1326, y: 298, s: 5, w: 400 },
          { t: "Rangia", x: 1298, y: 350, s: 6, w: 400 }, { t: "Barpeta", x: 1239, y: 353, s: 6, w: 400 }, { t: "Goalpara", x: 1203, y: 370, s: 6, w: 400 },
          { t: "Guwahati", x: 1307, y: 374, s: 8 }, { t: "Jagiroad", x: 1354, y: 374, s: 6, w: 400 },
        ]}
      />
    </>
  );
}

function Shield({ t, x, y }: { t: string; x: number; y: number }) {
  const w = t.length * 2.6 + 3;
  return (
    <g>
      <rect x={x - w / 2} y={y - 3.5} width={w} height="7" rx="1.500" fill="#f7cf3e" stroke="#c79a1e" strokeWidth="0.400" />
      <text x={x} y={y + 1.8} textAnchor="middle" fontFamily="Roboto, sans-serif" fontSize="5" fill="#3a2d00">{t}</text>
    </g>
  );
}

function BhutanScreen() {
  return (
    <div className="flex h-[336px] flex-col bg-white">
      <header className="flex h-[35px] shrink-0 items-center border-b border-[#eee] bg-[#fafafa] pr-[5px] pl-[15px]">
        <TreeLogo />
        <span className="ml-[3px]"><SoilLogo /></span>
        <span className="ml-[5px]"><BhutanSeal /></span>
        <Wocat className="ml-[3px] h-[18px] w-[68px]" />
        <SearchBox className="ml-[32px] w-[210px]" />
        <Brand className="ml-auto" />
      </header>
      <div className="grid min-h-0 flex-1 grid-cols-[141px_minmax(0,1fr)_159px] overflow-hidden">
        <div className="flex min-h-0 overflow-hidden">
          <div className="flex flex-1 flex-col overflow-hidden pt-[5px] pl-[10px] text-[6px] leading-[8px] whitespace-nowrap text-[#333]">
            <h2 className="text-[11px] leading-[13px] font-bold text-[#111]">
              Land Cover Transition
              <br />Comparison Tool
            </h2>
            <p className="mt-[9px] pl-px">
              This application is being developed to give
              <br />support to experts for land cover transition
              <br />analysis over different
              <br />products/classifications.
            </p>
            <p className="mt-[4px] pl-[2px]">
              For questions and feedback please
              <br />contact:
            </p>
            <a href="mailto:twangdi@moaf.gov.bt" className="mt-[2px] pl-[2px]">twangdi@moaf.gov.bt</a>
            <a href="mailto:wocat.cde@unibe.ch" className="mt-[2px] pl-[2px]">wocat.cde@unibe.ch</a>
            <Btn className="mt-[7px] ml-px w-[51px] text-[#222]">Close info panel</Btn>
            <Drop value="English" label="Language" className="mt-[8px] ml-px w-[90px]" />
            <p className="mt-[4px] pl-[2px]">
              Choose a Department from the list below
              <br />or click on the map to get statistics. (*)
            </p>
            <Drop value="Select district" label="District" className="mt-[5px] ml-px w-[115px]" />
            <Drop value="Select districts first" label="Sub-district" className="mt-[8px] ml-px w-[115px]" />
            <p className="mt-[5px] pl-[2px]">Select which layer you want to click on: (*)</p>
            <Drop value="None" label="Layer" className="mt-[5px] ml-px w-[90px]" />
            <p className="mt-[5px] pl-[2px]">
              Alternatively, if you want to calculate stats
              <br />for a preloaded asset please enter the
              <br />asset id and click on the button to load it
              <br />from GEE. If the asset contains more than
              <br />one feature, the first one will be
            </p>
          </div>
          <Scroll thumb="mt-[6px] h-[108px]" />
          <div className="w-px" />
        </div>
        <MapFrame
          viewBox="999 85 373 297"
          drawing={<BhutanMap />}
          right="right-[4px]"
          action="Select Bhutan"
          scale="20 km"
          source="Map data ©2023 Google"
        />
        <div className="flex min-h-0 overflow-hidden">
          <Splitter />
          <div className="flex flex-1 flex-col pl-[2px]">
            <h3 className="mt-[7px] ml-[5px] flex items-center gap-[3px] text-[8px] leading-[10px] font-bold whitespace-nowrap text-[#111]">
              Selected area of interest
              <span className="size-[8px] border border-[#f33]" />
            </h3>
            <p className="mt-[2px] ml-[5px] text-[6px] leading-[12px] whitespace-nowrap text-[#333]">
              <b>Name:</b> Kingdom of Bhutan
              <br />
              <b>Area:</b> 3,882,674.04 ha.
            </p>
            <Btn className="mt-[8px] ml-px w-[139px] text-[#800080]">ESA Default</Btn>
            <section className="mt-[7px] flex h-[240px] w-[138px] shrink-0 flex-col border border-[#86198b]">
              <MdOpenInNew className="mt-[5px] mr-[5px] size-[8px] shrink-0 self-end text-[#999]" />
              <h3 className={`mt-[8px] ml-[28px] ${chartTitle}`}>
                Land Cover change 2000 -
                <br />2019 - ESA Default
              </h3>
              <svg viewBox="0 0 110 170" className="mt-[2px] ml-[6px] h-[170px] w-[110px] shrink-0">
                <path d="M23 9.500h78M23 41.500h78M23 73.500h78M23 106.500h78" stroke="#ccc" />
                <path d="M23 25.500h78M23 57.500h78M23 90.500h78M23 122.500h78" stroke="#eee" />
                <path d="M25 42h3.500v96H25zM28.500 41.500h3.500v97h-3.500z" fill="#377f3f" stroke="#225c2a" strokeWidth="0.500" />
                <path d="M36 115h3.500v24H36zM39.500 116h3.500v23h-3.500z" fill="#c3922a" stroke="#8a6416" strokeWidth="0.500" />
                <path d="M47 137h7v2h-7z" fill="#e5d02e" />
                <path d="M80 135h7v4h-7z" fill="#cdd6d0" stroke="#899" strokeWidth="0.500" />
                <path d="M23 138.500h78" stroke="#555" />
                <g fontFamily="Liberation Sans, sans-serif" fontSize="6" fill="#666">
                  <text x="0" y="12">4,000,...</text>
                  <text x="0" y="44">3,000,...</text>
                  <text x="0" y="76">2,000,...</text>
                  <text x="0" y="109">1,000,...</text>
                  <text x="18" y="141">0</text>
                </g>
                <g fontFamily="Liberation Sans, sans-serif" fontSize="6" fill="#333" textAnchor="end">
                  <text transform="translate(30 148) rotate(-30)">Forest</text>
                  <text transform="translate(52 148) rotate(-30)">Cropland</text>
                  <text transform="translate(75 148) rotate(-30)">Artificial</text>
                  <text transform="translate(97 149) rotate(-30)">Water body</text>
                </g>
              </svg>
            </section>
          </div>
        </div>
      </div>
      <div className="h-[4px] shrink-0 bg-white" />
    </div>
  );
}

/* ---------- Panama ---------- */

const panama: Pt[] = [
  [1835, 180], [1845, 184], [1853, 183], [1863, 192], [1865, 203], [1877, 210], [1888, 207], [1897, 217], [1920, 219], [1937, 213], [1950, 205], [1967, 198], [1975, 192], [1987, 182], [1995, 180], [2013, 183], [2040, 186], [2063, 197], [2083, 217], [2095, 225], [2098, 240], [2105, 253], [2105, 260], [2097, 270], [2087, 280], [2082, 272], [2078, 282], [2072, 293], [2063, 285], [2052, 267], [2046, 255], [2055, 248], [2050, 240], [2043, 228], [2027, 213], [2003, 208], [1990, 217], [1980, 228], [1960, 242], [1949, 243], [1950, 254], [1960, 260], [1972, 275], [1970, 282], [1953, 283], [1947, 292], [1928, 294], [1925, 282], [1917, 264], [1913, 275], [1897, 267], [1887, 252], [1867, 243], [1840, 242], [1834, 253], [1827, 241], [1837, 233], [1835, 220], [1838, 213], [1832, 203], [1832, 187],
];
const panamaPath = rough(panama, 1.3, 27);
const panamaSpecks: [string, number, number, number, number, number, number][] = [
  ["#a93a35", 600, 1860, 228, 34, 22, 1], ["#a93a35", 800, 1925, 243, 44, 24, 1], ["#a93a35", 450, 1932, 275, 34, 26, 1], ["#a93a35", 450, 1970, 212, 34, 30, 0.9],
  ["#a93a35", 240, 2050, 225, 40, 28, 0.9], ["#a93a35", 180, 2008, 198, 40, 14, 0.8], ["#a93a35", 150, 2066, 224, 12, 12, 1.2], ["#a93a35", 220, 1905, 262, 24, 18, 1.2], ["#a93a35", 90, 2080, 252, 22, 30, 0.8],
  ["#4f9b4a", 260, 1892, 240, 22, 14, 1.1], ["#4f9b4a", 200, 1915, 225, 60, 30, 0.8], ["#4f9b4a", 170, 2052, 216, 30, 18, 1], ["#4f9b4a", 150, 1965, 228, 20, 12, 1], ["#4f9b4a", 150, 1850, 200, 22, 24, 0.8],
  ["#4c66e0", 60, 2070, 245, 16, 8, 0.9],
];
const islets: [number, number, number, number][] = [
  [1862, 193, 5, 4], [1868, 198, 6, 4], [1874, 204, 4, 3], [1880, 208, 3, 2], [1862, 247, 5, 2.5], [1860, 252, 3, 1.5], [1870, 251, 2, 1.5], [1874, 257, 1.5, 2.5],
  [1917, 278, 5, 3], [1916, 270, 2, 4], [1887, 292, 1.5, 2], [2015, 228, 1.5, 4], [2020, 236, 3, 3], [2024, 241, 3, 2.5], [2013, 243, 1.5, 2],
  [2052, 236, 3, 2.5], [2056, 241, 3, 2.5], [2048, 242, 2, 2], [1989, 220, 3, 1.5], [1864, 282, 1, 1], [1855, 263, 1, 1], [1896, 203, 1.5, 1],
];

function RoadMark({ t, x, y }: { t: string; x: number; y: number }) {
  return (
    <g>
      <rect x={x - 4.5} y={y - 3.5} width="9" height="7" rx="2" fill="#fff" stroke="#666" strokeWidth="0.700" />
      <text x={x} y={y + 1.8} textAnchor="middle" fontFamily="Roboto, sans-serif" fontSize="5" fill="#444">{t}</text>
    </g>
  );
}

function PanamaMap() {
  return (
    <>
      <rect x="1781" y="87" width="372" height="299" fill="#8ab4f8" />
      <path d={rough([[1776, 82], [1787, 84], [1788, 100], [1797, 120], [1812, 145], [1825, 165], [1838, 178], [1850, 190], [1850, 230], [1832, 241], [1820, 238], [1796, 232], [1795, 225], [1805, 228], [1812, 222], [1800, 212], [1790, 200], [1776, 188]], 1.3, 500)} fill="#94d2a9" />
      <path d={rough([[2158, 202], [2145, 214], [2130, 225], [2122, 238], [2122, 250], [2113, 245], [2107, 233], [2095, 224], [2085, 265], [2072, 294], [2082, 310], [2095, 324], [2096, 342], [2092, 365], [2100, 392], [2158, 392]], 1.3, 501)} fill="#94d2a9" />
      <g fill="#b5e1c2">
        <path d={blob(2128, 275, 8, 16, 502)} /><path d={blob(2100, 300, 12, 9, 503)} /><path d={blob(1795, 200, 7, 8, 504)} /><path d={blob(2143, 240, 8, 12, 505)} />
      </g>
      <g fill="#79bd90">
        <path d={blob(1800, 160, 8, 6, 506)} /><path d={blob(1815, 185, 8, 6, 507)} /><path d={blob(2140, 320, 8, 12, 508)} /><path d={blob(2148, 270, 4, 24, 509)} />
      </g>
      <g fill="none" stroke="#f0c96a" strokeWidth="1.200">
        <path d={rough([[1781, 168], [1800, 158], [1812, 155], [1826, 165]], 2, 510, false)} />
        <path d={rough([[1781, 190], [1800, 202], [1815, 212], [1832, 222]], 2, 511, false)} />
        <path d={rough([[1781, 178], [1792, 190], [1802, 204]], 2, 512, false)} />
        <path d={rough([[2152, 215], [2130, 226], [2125, 250], [2128, 270], [2138, 292], [2145, 308], [2152, 310]], 2, 513, false)} />
        <path d={rough([[1781, 160], [1790, 150], [1781, 142]], 2, 514, false)} />
        <path d={rough([[2130, 376], [2140, 360], [2152, 355]], 2, 515, false)} />
      </g>
      <g fill="none" stroke="#6e8c7c" strokeWidth="0.700" strokeDasharray="2 1">
        <path d={rough([[2130, 230], [2138, 255], [2140, 285], [2118, 310], [2125, 330], [2130, 344], [2152, 344]], 2, 516, false)} />
        <path d={rough([[1781, 115], [1795, 122], [1797, 112]], 1, 517, false)} />
      </g>
      <clipPath id="clip-panama"><path d={panamaPath} /></clipPath>
      <path d={panamaPath} fill="#e5e4c8" />
      <g clipPath="url(#clip-panama)">
        {panamaSpecks.map(([c, n, x, y, rx, ry, s], i) => (
          <path key={i} d={specks(600 + i, n, x, y, rx, ry, s)} fill={c} />
        ))}
        <g fill="#4c66e0">
          <path d={blob(1974, 202, 5, 7, 620)} /><path d={blob(2028, 201, 5, 4, 621)} /><path d={blob(2038, 204, 7, 2, 622)} /><path d={blob(1991, 197, 2, 3, 623)} />
        </g>
      </g>
      <path d={panamaPath} fill="none" stroke="#f8161a" strokeWidth="1.600" />
      <path d={rough([[1889, 274], [1882, 281], [1887, 286], [1895, 289], [1890, 281]], 1, 624)} fill="#e5e4c8" stroke="#f8161a" strokeWidth="1.600" />
      <g fill="#f8161a">
        {islets.map(([x, y, rx, ry], i) => (
          <path key={i} d={blob(x, y, rx, ry, 650 + i * 3)} />
        ))}
      </g>
      <path d={rough([[2015, 183], [2030, 181], [2036, 184], [2020, 187]], 2, 640)} fill="none" stroke="#f8161a" strokeWidth="1.400" />
      <Labels
        items={[
          { t: "in", x: 1781, y: 141, a: "start" }, { t: "osé", x: 1781, y: 157, a: "start" }, { t: "o", x: 1782, y: 167, s: 6, w: 400, a: "start" }, { t: "rtago", x: 1781, y: 173, s: 6, w: 400, a: "start" }, { t: "s", x: 1781, y: 183, s: 6, w: 400, a: "start" },
          { t: "Puerto Viejo", x: 1840, y: 166, s: 6, w: 400 }, { t: "de Talamanca", x: 1840, y: 173, s: 6, w: 400 }, { t: "del Toro", x: 1875, y: 187, s: 6, w: 400 },
          { t: "Colón", x: 1975, y: 186, s: 6, w: 400 }, { t: "rrera", x: 1990, y: 220, s: 6, w: 400 }, { t: "ma", x: 1978, y: 233, s: 8 }, { t: "re", x: 1954, y: 255, s: 6, w: 400 }, { t: "as Tablas", x: 1977, y: 268, s: 6, w: 400 },
          { t: "Necoclí", x: 2124, y: 231, s: 6, w: 400 }, { t: "Apartadó", x: 2132, y: 257, s: 6, w: 400 },
        ]}
      />
      <RoadMark t="10" x={1801} y={160} /><RoadMark t="32" x={1815} y={158} /><RoadMark t="2" x={1809} y={201} /><RoadMark t="90" x={2125} y={244} /><RoadMark t="62" x={2134} y={281} />
      <RoadMark t="6" x={2151} y={359} /><RoadMark t="52" x={2131} y={377} />
      <circle cx="2132" cy="262" r="1.200" fill="#fff" stroke="#444" strokeWidth="0.700" />
    </>
  );
}

const degradationRows = [
  ["Bosque nativo", "3,686,337.49", "14,332.1"],
  ["Manglar", "12,481.87", "144,028.2"],
  ["Rastrojo", "442,356.33", "3,041.9"],
  ["Pastizal/Arbustal", "60,122.51", "164.3"],
  ["Cultivos", "195,613.92", "3,984.1"],
  ["Humedal", "10,766.21", "5,731.5"],
  ["Artificial", "4,525.5", "1,242.7"],
  ["Otras tierras", "380.35", "1,584.6"],
  ["Agua", "4,409.31", "502.8"],
];

function PanamaScreen() {
  return (
    <div className="flex h-[336px] flex-col bg-white">
      <header className="flex h-[37px] shrink-0 items-center border-b border-[#eee] bg-[#fafafa] pr-[9px] pl-[19px]">
        <PanamaLogo />
        <Gef />
        <Fao className="ml-px size-[28px] shrink-0" />
        <Wocat className="h-[21px] w-[78px]" />
        <SearchBox className="ml-[13px] w-[209px]" />
        <Brand className="ml-auto w-[97px]" />
      </header>
      <div className="grid min-h-0 flex-1 grid-cols-[143px_minmax(0,1fr)_158px] overflow-hidden">
        <div className="flex min-h-0 overflow-hidden">
          <div className="flex flex-1 flex-col overflow-hidden pl-[13px] text-[6px] whitespace-nowrap text-[#333]">
            <p className="mt-[2px] shrink-0 pl-[2px] leading-[8px]">
              click en el botón "Cargar" para procesarlo.
              <br />Si el asset contiene más de una feature,
              <br />se procesará la primera.
            </p>
            <div className="mt-[4px] flex shrink-0 items-start justify-between pr-[13px]">
              <input aria-label="Id de asset en GEE" placeholder="Id de asset en GEE" className="h-[14px] w-[77px] border border-[#ddd] px-[3px] text-[7px] placeholder:text-[#777]" />
              <Btn className="w-[26px] text-[#222]">Cargar</Btn>
            </div>
            <h3 className="mt-[7px] mb-[3px] shrink-0 leading-[10px] font-bold text-[#111]">Capas ROI</h3>
            <div className="pl-[2px]">
              <Check label="Distritos" swatch="border-[#555]" />
              <Check label="Provincias" swatch="border-black" />
            </div>
            <Btn className="mt-[5px] w-[115px] text-[#800080]">Mapas Nacionales</Btn>
            <LayerBox
              items={["Cobertura y Uso del Suelo 2000", "Cobertura y Uso del Suelo 2021", "Ganancias 2000 - 2021", "Pérdidas 2000 - 2021", "Mapa de Degradacion 2000 - 2021"]}
              checked={[1, 4]}
              className="my-[7px] w-[114px] border-[#86198b]"
            />
            <Btn className="w-[115px] text-[#0b8080]">ESA Default</Btn>
            <LayerBox
              items={["Cobertura y Uso del Suelo 2000", "Cobertura y Uso del Suelo 2019", "Ganancias 2000 - 2019", "Pérdidas 2000 - 2019", "Mapa de Degradacion 2000 - 2019"]}
              checked={[]}
              className="mt-[7px] w-[114px] border-[#1f8a84]"
            />
          </div>
          <Scroll thumb="mt-[103px] h-[93px]" />
          <div className="w-px" />
        </div>
        <MapFrame
          viewBox="1781 87 372 299"
          drawing={<PanamaMap />}
          right="right-[4px]"
          action="Seleccionar Panamá"
          scale="50 km"
          source="Map data ©2023 Google, INEGI"
          legend={
            <Legend
              title="Mapa de Degradacion"
              className="top-[222px] h-[57px] w-[74px] pt-[2px]"
              rows={[["Degradacion", "#a9282c"], ["Estable", "#e4e4c9"], ["Mejora", "#45a24c"]]}
            />
          }
        />
        <div className="flex min-h-0 overflow-hidden">
          <Splitter />
          <div className="flex flex-1 flex-col pl-[2px]">
            <section className="flex w-[138px] flex-1 flex-col border-x border-[#86198b] px-[4px]">
              <div className="w-full shrink-0 overflow-hidden">
                <table className="h-[103px] w-[150px] table-fixed border-collapse font-['Liberation_Sans',sans-serif] text-[7px] leading-[8px] whitespace-nowrap text-[#222]">
                  <thead className="bg-[#e6eaf4]">
                    <tr className="h-[9px]">
                      <th className="w-[58px] align-top leading-[3px]">2000/2021</th>
                      <th className="w-[46px] border-l border-[#aaa] align-top text-[6px] leading-[8px]">nativo</th>
                      <th className="w-[46px] pl-[6px] text-left align-top leading-[3px]">Manglar</th>
                    </tr>
                  </thead>
                  <tbody>
                    {degradationRows.map((r) => (
                      <tr key={r[0]} className="even:bg-[#fafafa]">
                        <td className="pl-[2px]">{r[0]}</td>
                        <td className="border-l border-[#aaa] pr-[3px] text-right">{r[1]}</td>
                        <td className="border-l border-[#eee] pr-[12px] text-right">{r[2]}</td>
                      </tr>
                    ))}
                  </tbody>
                </table>
              </div>
              <div className="flex h-[6px] shrink-0 items-center bg-[#f4f4f4] px-[6px]">
                <div className="h-[5px] w-[34px] bg-[#c1c1c1]" />
              </div>
              <div className="flex h-[9px] shrink-0 items-center gap-[2px] bg-[#eef1f8] pl-[2px]">
                <svg viewBox="0 0 4 4" className="size-[4px]"><path d="M4 0v4L0 2z" /></svg>
                <svg viewBox="0 0 4 4" className="size-[4px]"><path d="M0 0v4l4-2z" /></svg>
              </div>
              <MdOpenInNew className="mt-[9px] size-[8px] shrink-0 self-end text-[#999]" />
              <h3 className={`-mt-[2px] ml-[24px] ${chartTitle}`}>
                Mapa de Degradacion
                <br />2000-2021
              </h3>
              <div className="mt-px ml-[24px]">
                <PieLegend text="Degradacion" />
              </div>
              <div className="mt-[20px] ml-[23px]">
                <Pie red={64} green={41} labels={[["11.3%", 31, 16], ["17.8%", 54, 20], ["70.9%", 35, 69]]} />
              </div>
            </section>
          </div>
        </div>
      </div>
    </div>
  );
}

/* ---------- monitor shell ---------- */

function Monitor({ children, caption }: { children: ReactNode; caption: string }) {
  return (
    <figure className="flex flex-col items-center">
      <div className="relative w-full overflow-hidden rounded-[18px] border-4 border-r-[3px] border-b-[3px] border-[#9fa2a1] border-r-[#8d8d8d] bg-[#212121] pr-[21px] pb-[16px] pl-[19px]">
        <div className="absolute inset-0 bg-black [clip-path:polygon(100%_0,100%_100%,38%_100%)]" />
        <div className="relative flex h-[16px] items-center justify-center">
          <span className="size-[8px] rounded-full border border-white" />
        </div>
        <div className="relative">{children}</div>
      </div>
      <svg viewBox="0 0 246 77" className="block h-[77px] w-[246px]">
        <defs>
          <linearGradient id="neck" x1="0" y1="0" x2="0" y2="1">
            <stop offset="0" stopColor="#828486" />
            <stop offset="0.350" stopColor="#9e9e9e" />
            <stop offset="1" stopColor="#a0a0a0" />
          </linearGradient>
        </defs>
        <path d="M48 0H198C198 40 211 52 246 71H0C35 52 48 40 48 0z" fill="url(#neck)" />
        <path d="M21 58H225Q233 64 245 70H1Q13 64 21 58z" fill="#b7b7b7" />
        <path d="M2 69H244Q246 71 246 73Q245 77 241 77H5Q1 77 0 73Q0 71 2 69z" fill="#808284" />
      </svg>
      <figcaption className="mt-[29px] text-center font-['Open_Sans',sans-serif] text-[28px] leading-[40px] font-bold text-[#d97f2e]">
        {caption}
      </figcaption>
    </figure>
  );
}

export default function App() {
  return (
    <main className="grid min-h-screen grid-cols-3 items-start gap-[60px] bg-white pt-[30px] pr-[49px] pl-[55px] font-[Roboto,sans-serif]">
      <Monitor caption="Colombia Land Cover Transitions Tool - Co-developed with IDEAM and the Ministry of Environment for PRAIS4 National Report. Languages: Spanish and English.">
        <ColombiaScreen />
      </Monitor>
      <Monitor caption="Bhutan Land Cover Transitions Tool - Co-developed with the National Soil Services Centre during PRAIS4 National Reporting. Languages: English">
        <BhutanScreen />
      </Monitor>
      <Monitor caption="Panama tool to compare Degrdation due to Land Cover transitions using national data and expert knowledge. Languages: Spanish and English.">
        <PanamaScreen />
      </Monitor>
    </main>
  );
}
